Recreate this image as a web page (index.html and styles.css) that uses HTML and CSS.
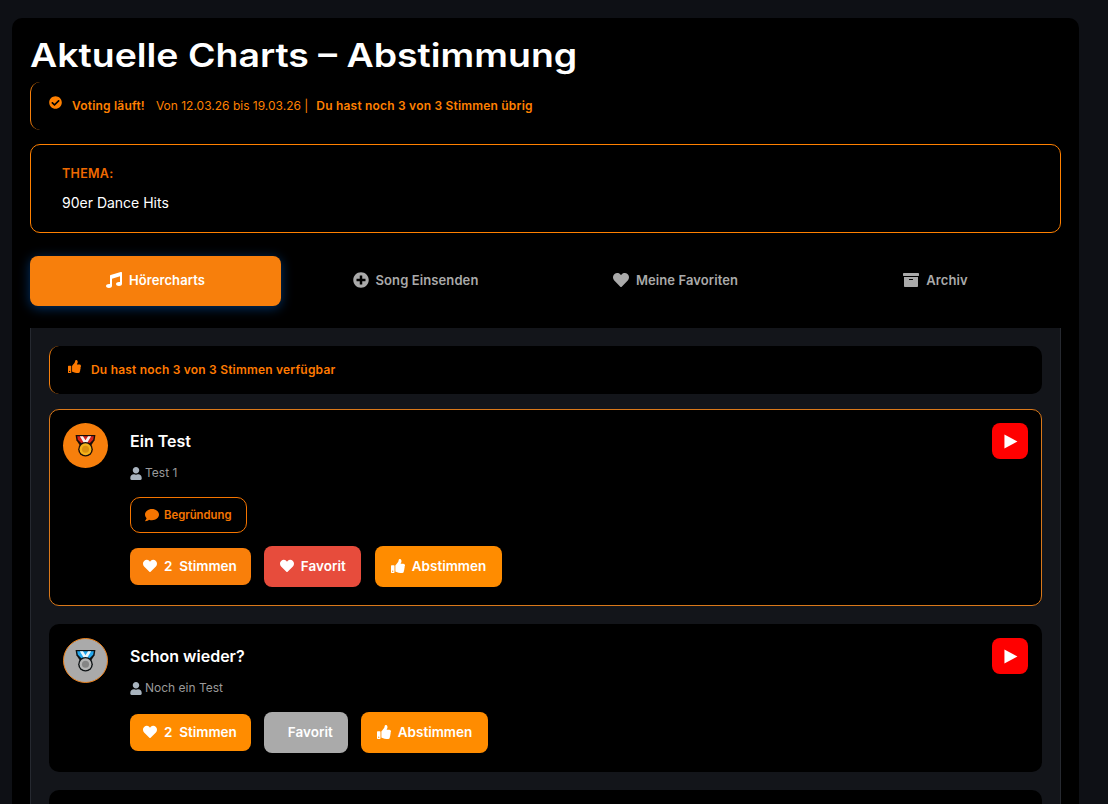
FILE: index.html
```html
<!DOCTYPE html>
<html lang="de">
	<head>
		<meta charset="utf-8" />
		<title>Aktuelle Charts - Abstimmung</title>
		<link rel="stylesheet" href="styles.css">
	</head>
	<body>
		<svg class="defs" aria-hidden="true">
			<symbol id="i-check" viewBox="0 0 512 512"><path d="M504 256c0 136.967-111.033 248-248 248S8 392.967 8 256 119.033 8 256 8s248 111.033 248 248zM227.314 387.314l184-184c6.248-6.248 6.248-16.379 0-22.627l-22.627-22.627c-6.248-6.249-16.379-6.249-22.628 0L216 308.118l-70.059-70.059c-6.248-6.248-16.379-6.248-22.628 0l-22.627 22.627c-6.248 6.248-6.248 16.379 0 22.627l104 104c6.249 6.249 16.379 6.249 22.628.001z"/></symbol>
			<symbol id="i-music" viewBox="0 0 512 512"><path d="M470.38 1.51L150.41 96A32 32 0 0 0 128 126.51v261.41A139 139 0 0 0 96 384c-53 0-96 28.66-96 64s43 64 96 64 96-28.66 96-64V214.32l256-75v184.61a138.4 138.4 0 0 0-32-3.93c-53 0-96 28.66-96 64s43 64 96 64 96-28.65 96-64V32a32 32 0 0 0-41.62-30.49z"/></symbol>
			<symbol id="i-plus" viewBox="0 0 512 512"><path d="M256 8C119 8 8 119 8 256s111 248 248 248 248-111 248-248S393 8 256 8zm144 276c0 6.6-5.4 12-12 12h-92v92c0 6.6-5.4 12-12 12h-56c-6.6 0-12-5.4-12-12v-92h-92c-6.6 0-12-5.4-12-12v-56c0-6.6 5.4-12 12-12h92v-92c0-6.6 5.4-12 12-12h56c6.6 0 12 5.4 12 12v92h92c6.6 0 12 5.4 12 12v56z"/></symbol>
			<symbol id="i-heart" viewBox="0 0 512 512"><path d="M462.3 62.6C407.5 15.9 326 24.3 275.7 76.2L256 96.5l-19.7-20.3C186.1 24.3 104.5 15.9 49.7 62.6c-62.8 53.6-66.1 149.8-9.9 207.9l193.5 199.8c12.5 12.9 32.8 12.9 45.3 0l193.5-199.8c56.3-58.1 53-154.3-9.8-207.9z"/></symbol>
			<symbol id="i-archive" viewBox="0 0 512 512"><path d="M32 448c0 17.7 14.3 32 32 32h384c17.7 0 32-14.3 32-32V160H32v288zm160-212c0-6.6 5.4-12 12-12h104c6.6 0 12 5.4 12 12v8c0 6.6-5.4 12-12 12H204c-6.6 0-12-5.4-12-12v-8zM480 32H32C14.3 32 0 46.3 0 64v48c0 8.8 7.2 16 16 16h480c8.8 0 16-7.2 16-16V64c0-17.7-14.3-32-32-32z"/></symbol>
			<symbol id="i-thumb" viewBox="0 0 512 512"><path d="M104 224H24c-13.255 0-24 10.745-24 24v240c0 13.255 10.745 24 24 24h80c13.255 0 24-10.745 24-24V248c0-13.255-10.745-24-24-24zM64 472c-13.255 0-24-10.745-24-24s10.745-24 24-24 24 10.745 24 24-10.745 24-24 24zM384 81.452c0 42.416-25.97 66.208-33.277 94.548h101.723c33.397 0 59.397 27.746 59.553 58.098.084 17.938-7.546 37.249-19.439 49.197l-.11.11c9.836 23.337 8.237 56.037-9.308 79.469 8.681 25.895-.069 57.704-16.382 74.757 4.298 17.598 2.244 32.575-6.148 44.632C440.202 511.587 389.616 512 346.839 512l-2.845-.001c-48.287-.017-87.806-17.598-119.56-31.725-15.957-7.099-36.821-15.887-52.651-16.178-6.54-.12-11.783-5.457-11.783-11.998v-213.77c0-3.2 1.282-6.271 3.558-8.521 39.614-39.144 56.648-80.587 89.117-113.111 14.804-14.832 20.188-37.236 25.393-58.902C282.515 39.293 291.817 0 312 0c24 0 72 8 72 81.452z"/></symbol>
			<symbol id="i-user" viewBox="0 0 448 512"><path d="M224 256c70.7 0 128-57.3 128-128S294.7 0 224 0 96 57.3 96 128s57.3 128 128 128zm89.6 32h-16.7c-22.2 10.2-46.9 16-72.9 16s-50.6-5.8-72.9-16h-16.7C60.2 288 0 348.2 0 422.4V464c0 26.5 21.5 48 48 48h352c26.5 0 48-21.5 48-48v-41.6c0-74.2-60.2-134.4-134.4-134.4z"/></symbol>
			<symbol id="i-comment" viewBox="0 0 512 512"><path d="M256 32C114.6 32 0 125.1 0 240c0 49.6 21.4 95 57 130.7C44.5 421.1 2.7 466 2.2 466.5c-2.2 2.3-2.8 5.7-1.5 8.7S4.8 480 8 480c66.3 0 116-31.8 140.6-51.4 32.7 12.3 69 19.4 107.4 19.4 141.4 0 256-93.1 256-208S397.4 32 256 32z"/></symbol>
			<symbol id="i-play" viewBox="0 0 16 16"><path d="M1.5 0.6 15.4 8 1.5 15.4z"/></symbol>
		</svg>

		<div id="wrapper">
			<h1><span>Aktuelle Charts – Abstimmung</span></h1>

			<div class="status">
				<svg class="ico status-ico"><use href="#i-check"/></svg>
				<b>Voting läuft!</b>
				<span>Von 12.03.26 bis 19.03.26 |</span>
				<b>Du hast noch 3 von 3 Stimmen übrig</b>
			</div>

			<div class="theme">
				<div class="theme-label">THEMA:</div>
				<div class="theme-text">90er Dance Hits</div>
			</div>

			<nav class="tabs">
				<a class="tab active"><svg class="ico"><use href="#i-music"/></svg>Hörercharts</a>
				<a class="tab"><svg class="ico"><use href="#i-plus"/></svg>Song Einsenden</a>
				<a class="tab"><svg class="ico"><use href="#i-heart"/></svg>Meine Favoriten</a>
				<a class="tab"><svg class="ico"><use href="#i-archive"/></svg>Archiv</a>
			</nav>

			<section class="panel">
				<div class="votes-left">
					<svg class="ico"><use href="#i-thumb"/></svg>
					<b>Du hast noch 3 von 3 Stimmen verfügbar</b>
				</div>

				<article class="song top">
					<div class="rank gold">
						<svg class="medal" viewBox="0 0 20 22">
							<path d="M.5 1h19l-.8 5-4 6H5.3l-4-6z" fill="#1a0d08"/>
							<path d="M2 2.2h16l-.7 3.4-5 5H7.7l-5-5z" fill="#d6231d"/>
							<path d="M4.6 2.2h3L10 6l2.4-3.8h3L11 9.6H9z" fill="#f7f2ef"/>
							<circle cx="10" cy="14.6" r="7" fill="#1a0d08"/>
							<circle cx="10" cy="14.6" r="5.7" fill="#f4b21b"/>
							<circle cx="10" cy="14.6" r="3.4" fill="#dc900f"/>
						</svg>
					</div>
					<div class="song-body">
						<h3>Ein Test</h3>
						<div class="artist"><svg class="ico"><use href="#i-user"/></svg>Test 1</div>
						<a class="reason"><svg class="ico"><use href="#i-comment"/></svg>Begründung</a>
						<div class="actions">
							<span class="btn count dark"><svg class="ico"><use href="#i-heart"/></svg>2&nbsp; Stimmen</span>
							<a class="btn fav"><svg class="ico"><use href="#i-heart"/></svg>Favorit</a>
							<a class="btn vote narrow"><svg class="ico"><use href="#i-thumb"/></svg>Abstimmen</a>
						</div>
					</div>
					<a class="yt"><svg class="ico"><use href="#i-play"/></svg></a>
				</article>

				<article class="song">
					<div class="rank silver">
						<svg class="medal" viewBox="0 0 20 22">
							<path d="M.5 1h19l-.8 5-4 6H5.3l-4-6z" fill="#0d1214"/>
							<path d="M2 2.2h16l-.7 3.4-5 5H7.7l-5-5z" fill="#22a7ee"/>
							<path d="M4.6 2.2h3L10 6l2.4-3.8h3L11 9.6H9z" fill="#e9f7fd"/>
							<circle cx="10" cy="14.6" r="7" fill="#0d1214"/>
							<circle cx="10" cy="14.6" r="5.7" fill="#b4b4b4"/>
							<circle cx="10" cy="14.6" r="3.4" fill="#858585"/>
						</svg>
					</div>
					<div class="song-body">
						<h3>Schon wieder?</h3>
						<div class="artist"><svg class="ico"><use href="#i-user"/></svg>Noch ein Test</div>
						<div class="actions">
							<span class="btn count"><svg class="ico"><use href="#i-heart"/></svg>2&nbsp; Stimmen</span>
							<a class="btn fav off">Favorit</a>
							<a class="btn vote"><svg class="ico"><use href="#i-thumb"/></svg>Abstimmen</a>
						</div>
					</div>
					<a class="yt"><svg class="ico"><use href="#i-play"/></svg></a>
				</article>

				<article class="song empty"></article>
			</section>
		</div>
	</body>
</html>
```

FILE: styles.css
```css
html{
	overflow: hidden;
}

body{
	background-color: #0e1015;
	margin: 0;
	padding: 18px 29px 0 12px;
	font-family: "Inter", "Liberation Sans", sans-serif;
	font-size: 13px;
	color: #fff;
}

.defs{
	display: none;
}

.ico{
	width: 1em;
	height: 1em;
	fill: currentColor;
	flex: none;
}

#wrapper{
	background-color: #000;
	border-radius: 10px 10px 0 0;
	padding: 18px;
}

h1{
	font-size: 33px;
	font-weight: 600;
	line-height: 34px;
	margin: 2px 0 10px;
}

h1 span{
	display: inline-block;
	transform: scaleX(1.134);
	transform-origin: left center;
}

.status{
	display: flex;
	align-items: center;
	height: 48px;
	box-sizing: border-box;
	padding: 0 18px 2px;
	border-left: 1px solid #f57f0c;
	border-radius: 10px;
	color: #ff8000;
	font-size: 12px;
	margin-bottom: 14px;
}

.status b{
	font-weight: 600;
	letter-spacing: 0.2px;
}

.status span{
	margin: 0 8px 0 11px;
	font-weight: 400;
}

.status-ico{
	font-size: 13px;
	margin: -6px 10px 0 0;
}

.theme{
	border: 1px solid #ff8000;
	border-radius: 10px;
	height: 89px;
	box-sizing: border-box;
	padding: 21px 31px;
	margin-bottom: 23px;
}

.theme-label{
	color: #f06a00;
	font-size: 12.5px;
	font-weight: 600;
	letter-spacing: 0.3px;
	margin-bottom: 13px;
}

.theme-text{
	font-size: 14px;
}

.tabs{
	display: grid;
	grid-template-columns: repeat(4, 1fr);
	gap: 9px;
	margin-bottom: 22px;
}

.tab{
	display: flex;
	align-items: center;
	justify-content: center;
	gap: 7px;
	height: 50px;
	box-sizing: border-box;
	padding-bottom: 2px;
	border-radius: 8px;
	color: #aaa;
	font-size: 13px;
	font-weight: 600;
	letter-spacing: 0.1px;
}

.tab .ico{
	font-size: 16px;
}

.tab.active{
	background-color: #f77f0c;
	color: #fff;
	box-shadow: 0 2px 12px rgba(0, 110, 230, 0.45);
}

.panel{
	background-color: #13151a;
	border-left: 1px solid #262930;
	border-right: 1px solid #262930;
	padding: 18px 18px 0;
}

.votes-left{
	display: flex;
	align-items: center;
	height: 48px;
	box-sizing: border-box;
	padding: 0 18px 2px;
	background-color: #000;
	border-left: 1px solid #f57f0c;
	border-radius: 10px;
	color: #ff7a00;
	font-size: 12px;
	margin-bottom: 15px;
}

.votes-left b{
	font-weight: 600;
	letter-spacing: 0.2px;
}

.votes-left .ico{
	font-size: 13px;
	margin: -6px 10px 0 0;
}

.song{
	display: flex;
	background-color: #000;
	border-radius: 10px;
	padding: 14px 14px 19px 14px;
	margin-bottom: 18px;
}

.song.top{
	border: 1px solid #d9781a;
	padding: 13px 13px 18px 13px;
}

.song.empty{
	height: 60px;
	margin-bottom: 0;
}

.rank{
	display: flex;
	align-items: center;
	justify-content: center;
	width: 45px;
	height: 45px;
	box-sizing: border-box;
	border-radius: 50%;
	flex: none;
	margin-right: 22px;
}

.rank.gold{
	background-color: #f77f0c;
}

.rank.silver{
	background-color: #aaa;
	border: 1px solid #e8801c;
}

.medal{
	width: 21px;
	height: 23px;
}

.song-body{
	flex: 1;
}

h3{
	font-size: 16px;
	font-weight: 600;
	line-height: 20px;
	margin: 8px 0 14px;
}

.artist{
	display: flex;
	align-items: center;
	color: #9a9a9a;
	font-size: 12px;
	line-height: 16px;
	margin-bottom: 16px;
}

.artist .ico{
	color: #a9b4bf;
	width: 12px;
	height: 13px;
	margin-right: 3px;
}

.reason{
	display: inline-flex;
	align-items: center;
	gap: 5px;
	height: 36px;
	box-sizing: border-box;
	padding: 0 15px 0 14px;
	border: 1px solid #f57500;
	border-radius: 10px;
	color: #f57500;
	font-size: 11.3px;
	font-weight: 600;
	margin-bottom: 13px;
}

.reason .ico{
	font-size: 14px;
}

.actions{
	display: flex;
	align-items: center;
	gap: 13px;
}

.btn{
	display: inline-flex;
	align-items: center;
	gap: 7px;
	height: 41px;
	box-sizing: border-box;
	padding: 0 13px 1px;
	border-radius: 8px;
	background-color: #ff8c00;
	color: #fff;
	font-size: 13.5px;
	font-weight: 600;
}

.btn .ico{
	font-size: 14px;
}

.count{
	height: 37px;
	padding: 0 14px 1px 13px;
}

.count.dark{
	background-color: #f97f0a;
}

.fav{
	background-color: #e74c3c;
	padding: 0 15px 1px 16px;
}

.fav.off{
	background-color: #aaa;
	padding: 0 15px 1px 24px;
}

.vote{
	padding: 0 16px 1px;
}

.vote.narrow{
	margin-left: 1px;
}

.yt{
	display: flex;
	align-items: center;
	justify-content: center;
	width: 36px;
	height: 36px;
	background-color: #f00;
	border-radius: 8px;
	color: #fff;
	font-size: 15px;
	flex: none;
}
```
